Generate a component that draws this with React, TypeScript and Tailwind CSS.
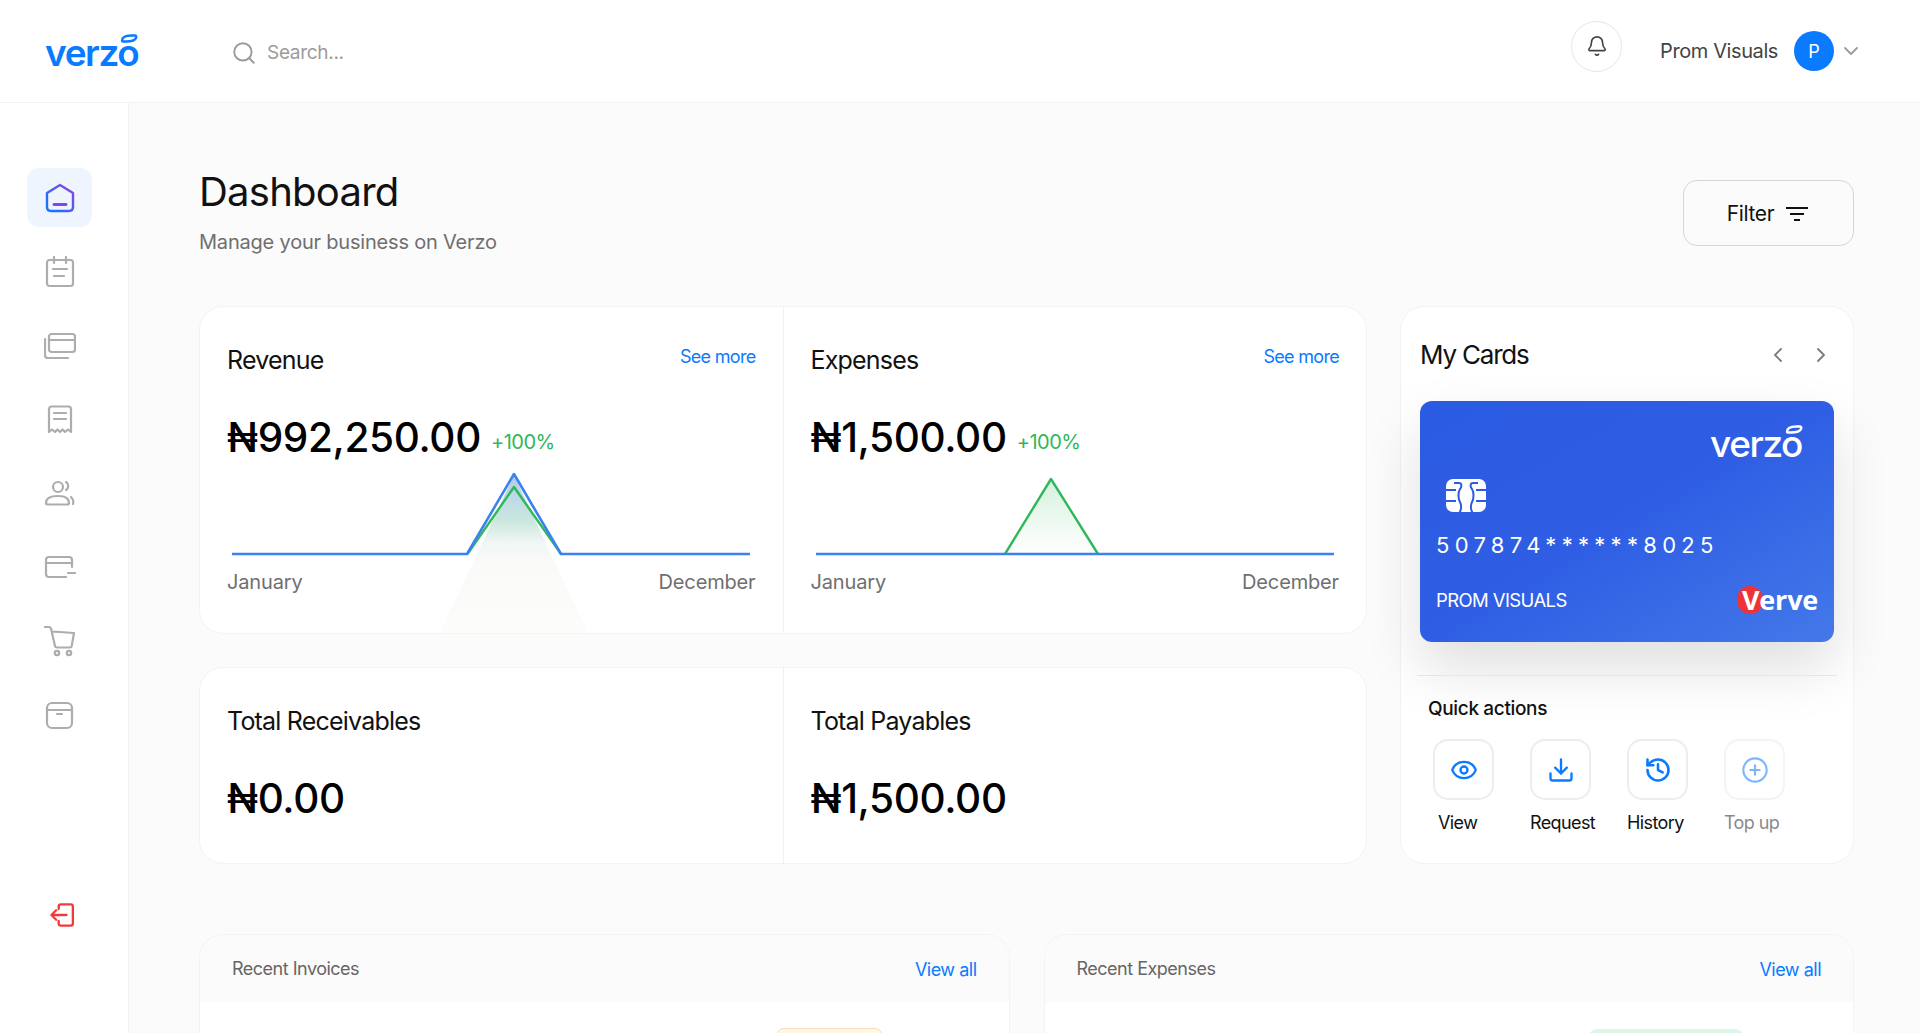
import { Search, Bell, ChevronDown, ChevronLeft, ChevronRight, Eye, Download, History, CirclePlus } from 'lucide-react';

const font = { fontFamily: 'Inter, "Liberation Sans", sans-serif' };

function Logo({ white = false }: { white?: boolean }) {
  const color = white ? 'text-white font-medium' : 'text-[#0a7aff] font-semibold';
  return (
    <div className={`relative w-[94px] h-[34px] ${color}`}>
      <span className="absolute left-0 bottom-[-5px] text-[37px] leading-[40px] tracking-[-1.4px]">verzo</span>
      <svg className="absolute right-[1px] top-0" width="18" height="9" viewBox="0 0 18 9" fill="none">
        <path d="M2 7 C2 3 6 1.5 11 1.5 H15 C16.5 1.5 16.5 3 16 4 C15 6.5 11 7.5 6 7.5 H3 C2.4 7.5 2 7.3 2 7 Z" stroke="currentColor" strokeWidth="2.4" />
      </svg>
    </div>
  );
}

function HomeIcon() {
  return (
    <svg width="30" height="30" viewBox="0 0 30 30" fill="none" strokeWidth="2.4" strokeLinecap="round" strokeLinejoin="round">
      <defs>
        <linearGradient id="homeGrad" x1="2" y1="28" x2="28" y2="4" gradientUnits="userSpaceOnUse">
          <stop stopColor="#0a7aff" />
          <stop offset="1" stopColor="#8a44e0" />
        </linearGradient>
      </defs>
      <path d="M15 2 L2 10 V24 C2 26.5 3.5 28 6 28 H24 C26.5 28 28 26.5 28 24 V10 Z" stroke="url(#homeGrad)" />
      <path d="M9 21.5 H21" stroke="#7c4ae6" strokeWidth="2.8" />
    </svg>
  );
}

const stroke = { stroke: '#adadad', strokeWidth: 2.2, strokeLinecap: 'round' as const, strokeLinejoin: 'round' as const, fill: 'none' };

function NavIcon({ name }: { name: string }) {
  return (
    <svg width="32" height="32" viewBox="0 0 32 32" {...stroke}>
      {name === 'calendar' && (
        <>
          <rect x="3" y="4" width="26" height="26" rx="2.5" />
          <path d="M10 1 V7 M22 1 V7 M9 13 H23 M10 20 H20" />
        </>
      )}
      {name === 'cards' && (
        <>
          <rect x="5" y="4" width="26" height="18" rx="2.5" />
          <path d="M5 10 H31" />
          <path d="M1 9 V25 C1 27 2 28 4 28 H24" />
        </>
      )}
      {name === 'receipt' && (
        <>
          <path d="M5 28 V5 C5 3.5 6 2.5 7.5 2.5 H24.5 C26 2.5 27 3.5 27 5 V28 L24 25.5 L21 28 L18.5 25.5 L16 28 L13.5 25.5 L11 28 L8 25.5 Z" />
          <path d="M10 9 H22 M10 15 H22" />
        </>
      )}
      {name === 'users' && (
        <>
          <circle cx="14" cy="10" r="5" />
          <path d="M2 26 C2 21 7 19 14 19 C20 19 25 21 25 26 C25 27 24 27.5 23 27.5 H4 C3 27.5 2 27 2 26 Z" />
          <path d="M22 5 C25 7 25 11 22 13 M27 20 C29 22 30 24 29 27" />
        </>
      )}
      {name === 'wallet' && (
        <>
          <path d="M22 26 H5 C3 26 2 25 2 23 V9 C2 7 3 6 5 6 H25 C27 6 28 7 28 9 V16" />
          <path d="M2 12 H28 M24 22 H31" />
        </>
      )}
      {name === 'cart' && (
        <>
          <path d="M1 2 H5 C6 2 6.5 2.5 7 3.5 L11 21 C11.2 22 12 22.5 13 22.5 H26 C27 22.5 27.5 22 27.7 21 L30 8 L8 6.5" />
          <circle cx="13" cy="28" r="2.2" />
          <circle cx="25" cy="28" r="2.2" />
        </>
      )}
      {name === 'box' && (
        <>
          <rect x="3" y="4" width="25" height="25" rx="5" />
          <path d="M3 11 H28 M13 15 H18" />
        </>
      )}
    </svg>
  );
}

function Sidebar() {
  const items = ['calendar', 'cards', 'receipt', 'users', 'wallet', 'cart', 'box'];
  return (
    <aside className="w-[129px] shrink-0 bg-white border-r border-[#f1f1f1] flex flex-col pl-[27px] pt-[65px]">
      <div className="w-[65px] h-[59px] rounded-[12px] bg-[#eff5ff] flex items-center justify-center">
        <HomeIcon />
      </div>
      <div className="flex flex-col gap-[41.8px] w-[65px] items-center mt-[29px]">
        {items.map(i => (
          <div key={i} className="h-[32px] flex items-center justify-center">
            <NavIcon name={i} />
          </div>
        ))}
      </div>
      <div className="w-[65px] flex justify-center mt-[172px] pl-[7px]">
        <svg width="26" height="24" viewBox="0 0 30 28" fill="none" stroke="#f23a3a" strokeWidth="2.7" strokeLinecap="round" strokeLinejoin="round">
          <path d="M10 7 V4 C10 2.5 11 1.5 12.5 1.5 H24 C25.5 1.5 26.5 2.5 26.5 4 V24 C26.5 25.5 25.5 26.5 24 26.5 H12.5 C11 26.5 10 25.5 10 24 V21" />
          <path d="M19 14 H2 M7 8.5 L1.5 14 L7 19.5" />
        </svg>
      </div>
    </aside>
  );
}

function RevenueChart() {
  return (
    <svg className="block overflow-visible" width="520" height="84" viewBox="0 0 520 84" fill="none">
      <defs>
        <linearGradient id="revFill" x1="0" y1="0" x2="0" y2="1">
          <stop stopColor="#8fb4ea" stopOpacity="0.7" />
          <stop offset="0.3" stopColor="#a9d8c8" stopOpacity="0.6" />
          <stop offset="0.44" stopColor="#e6efee" stopOpacity="0.5" />
          <stop offset="0.52" stopColor="#f8f8f6" stopOpacity="0.8" />
          <stop offset="1" stopColor="#fbfbf9" stopOpacity="0.7" />
        </linearGradient>
      </defs>
      <path d="M282 1 L208 159 H356 Z" fill="url(#revFill)" />
      <path d="M235.5 80 L282 13 L329 80" stroke="#2fb85a" strokeWidth="2.4" strokeLinejoin="round" />
      <path d="M0 80 H235 L282 0 L329 80 H518" stroke="#3b82f0" strokeWidth="2.6" strokeLinejoin="round" />
    </svg>
  );
}

function ExpenseChart() {
  return (
    <svg className="block overflow-visible" width="520" height="84" viewBox="0 0 520 84" fill="none">
      <defs>
        <linearGradient id="expFill" x1="0" y1="0" x2="0" y2="1">
          <stop stopColor="#2fb85a" stopOpacity="0.2" />
          <stop offset="1" stopColor="#2fb85a" stopOpacity="0" />
        </linearGradient>
      </defs>
      <path d="M189 80 L235 5 L282 80 Z" fill="url(#expFill)" />
      <path d="M189 80 L235 5 L282 80" stroke="#2fb85a" strokeWidth="2.4" strokeLinejoin="round" />
      <path d="M0 80 H518" stroke="#3b82f0" strokeWidth="2.6" />
    </svg>
  );
}

function StatCell({ title, amount, badge, link, chart, border }: { title: string; amount: string; badge?: string; link?: boolean; chart?: React.ReactNode; border?: boolean }) {
  return (
    <div className={`relative flex-1 pl-[27px] pr-[27px] overflow-hidden ${border ? 'border-r border-[#f1f1f1]' : ''}`}>
      <div className="flex justify-between items-start pt-[38px]">
        <p className="text-[25px] leading-[30px] text-[#111] tracking-[-0.8px]">{title}</p>
        {link && <a className="text-[18px] leading-[24px] text-[#0a7aff] tracking-[-0.7px]">See more</a>}
      </div>
      <div className="flex items-center gap-[10px] mt-[39px]">
        <span className="text-[40.5px] leading-[48px] font-medium text-black tracking-[-0.35px]">{amount}</span>
        {badge && <span className="text-[20px] leading-[24px] mt-[8px] text-[#2fb85a] tracking-[-0.5px]">{badge}</span>}
      </div>
      {chart && (
        <>
          <div className="mt-[12px] ml-[5px]">{chart}</div>
          <div className="relative flex justify-between mt-[10px] text-[20px] leading-[28px] text-[#6f6f6f] tracking-[-0.15px]">
            <span>January</span>
            <span>December</span>
          </div>
        </>
      )}
    </div>
  );
}

function CardChip() {
  return (
    <svg width="40" height="33" viewBox="0 0 40 33" fill="none">
      <rect width="40" height="33" rx="7" fill="white" />
      <path d="M0 11 H10 M0 22 H10 M30 11 H40 M30 22 H40 M8 4 H13 C16 4 16 8 14 10 C12 13 12 20 14 23 C16 27 15 33 13 33 M32 4 H27 C24 4 24 8 26 10 C28 13 28 20 26 23 C24 27 25 33 27 33" stroke="#2c5be3" strokeWidth="2" />
    </svg>
  );
}

function QuickAction({ label, icon, muted, labelOffset }: { label: string; icon: React.ReactNode; muted?: boolean; labelOffset: string }) {
  return (
    <div className="w-[61px] relative">
      <div className={`w-[61px] h-[61px] rounded-[15px] bg-white border-2 flex items-center justify-center ${muted ? 'border-[#f4f4f4]' : 'border-[#ededed]'}`}>
        {icon}
      </div>
      <p className={`mt-[10px] whitespace-nowrap text-[18px] leading-[26px] tracking-[-0.6px] ${labelOffset} ${muted ? 'text-[#8a8a8a]' : 'text-[#111]'}`}>{label}</p>
    </div>
  );
}

function MyCards() {
  return (
    <div className="row-span-2 bg-white rounded-[24px] border border-[#f3f3f3] flex flex-col">
      <div className="flex items-center justify-between pl-[19px] pr-[20px] pt-[30px] pb-[28px]">
        <h3 className="text-[26px] leading-[36px] text-[#111] tracking-[-1.2px]">My Cards</h3>
        <div className="flex gap-[19px] text-[#7b7b7b]">
          <ChevronLeft className="w-6 h-6" strokeWidth={1.8} />
          <ChevronRight className="w-6 h-6" strokeWidth={1.8} />
        </div>
      </div>
      <div className="mx-[19px] h-[241px] rounded-[12px] bg-gradient-to-br from-[#2c5be3] via-[#2f5ee4] to-[#4478e9] shadow-[0_26px_56px_rgba(0,0,0,0.13)] text-white px-[16px] pt-[24px] flex flex-col">
        <div className="flex justify-end pr-[14px]">
          <Logo white />
        </div>
        <div className="mt-[20px] ml-[10px]"><CardChip /></div>
        <p className="mt-[18px] text-[22px] leading-[30px] tracking-[5.3px]">507874******8025</p>
        <div className="flex justify-between items-center mt-[24px]">
          <p className="text-[18.5px] leading-[28px] tracking-[-0.6px]">PROM VISUALS</p>
          <div className="relative h-[30px] w-[81px] mt-[2px]">
            <span className="absolute left-0 top-0 w-[26px] h-[28px] rounded-full bg-[#ee3338]" />
            <span className="absolute left-[5px] top-[-3px] text-[27px] leading-[34px] font-bold tracking-[-0.2px]" style={{ fontFamily: '"Open Sans", sans-serif' }}>Verve</span>
          </div>
        </div>
      </div>
      <div className="relative h-px bg-[#e6e6e6] mx-[16px] mt-[33px]" />
      <p className="relative ml-[27px] mt-[21px] text-[19px] leading-[24px] font-medium text-[#111] tracking-[-0.35px]">Quick actions</p>
      <div className="flex gap-[36px] ml-[32px] mt-[18px]">
        <QuickAction label="View" labelOffset="ml-[5px]" icon={<Eye className="w-7 h-7 text-[#0a7aff]" strokeWidth={2} />} />
        <QuickAction label="Request" labelOffset="" icon={<Download className="w-7 h-7 text-[#0a7aff]" strokeWidth={2} />} />
        <QuickAction label="History" labelOffset="" icon={<History className="w-7 h-7 text-[#0a7aff]" strokeWidth={2.2} />} />
        <QuickAction label="Top up" labelOffset="" muted icon={<CirclePlus className="w-7 h-7 text-[#7fb5fb]" strokeWidth={1.8} />} />
      </div>
    </div>
  );
}

function RecentPanel({ title, pill }: { title: string; pill: string }) {
  return (
    <div className="h-[120px] rounded-t-[24px] border border-b-0 border-[#f3f3f3] bg-white overflow-hidden">
      <div className="h-[67px] bg-[#fbfbfb] flex items-center justify-between px-[32px]">
        <p className="text-[18px] text-[#666] tracking-[-0.5px]">{title}</p>
        <a className="text-[18px] text-[#0a7aff] tracking-[-0.5px] mt-[2px]">View all</a>
      </div>
      <div className="flex justify-end pr-[124px]">
        <div className={pill} />
      </div>
    </div>
  );
}

export default function App() {
  return (
    <div className="h-screen w-full overflow-hidden flex flex-col bg-[#fbfbfb]" style={font}>
      <header className="h-[103px] shrink-0 bg-white border-b border-[#f3f3f3] flex items-center pl-[45px] pr-[57px]">
        <Logo />
        <div className="flex items-center gap-[10px] ml-[92px] mt-[4px] text-[#9b9b9b]">
          <Search className="w-[26px] h-[26px]" strokeWidth={1.8} />
          <span className="text-[19px] tracking-[-0.3px]">Search...</span>
        </div>
        <div className="ml-auto flex items-center">
          <div className="w-[51px] h-[51px] mt-[-10px] rounded-full border border-[#e6e6e6] flex items-center justify-center text-[#444]">
            <Bell className="w-[22px] h-[22px]" strokeWidth={1.8} />
          </div>
          <span className="ml-[38px] text-[20px] text-[#444] tracking-[-0.4px]">Prom Visuals</span>
          <div className="ml-[16px] w-[40px] h-[40px] rounded-full bg-[#0a7aff] text-white flex items-center justify-center text-[18px]">P</div>
          <ChevronDown className="ml-[5px] w-[24px] h-[24px] text-[#9b9b9b]" strokeWidth={1.8} />
        </div>
      </header>
      <div className="flex flex-1 min-h-0">
        <Sidebar />
        <main className="flex-1 pl-[70px] pr-[66px] pt-[63px] overflow-hidden">
          <div className="flex justify-between items-start">
            <div>
              <h1 className="mt-[1px] text-[40px] leading-[50px] font-normal text-[#111] tracking-[-0.75px]">Dashboard</h1>
              <p className="mt-[11px] text-[20px] leading-[28px] text-[#6f6f6f] tracking-[-0.2px]">Manage your business on Verzo</p>
            </div>
            <button className="mt-[14px] w-[171px] h-[66px] rounded-[14px] border-[1.5px] border-[#d6d6d6] flex items-center justify-center gap-[12px] pt-[2px] pr-[2px] text-[21px] text-[#111] tracking-[-0.4px]">
              Filter
              <svg width="22" height="16" viewBox="0 0 22 16" fill="none" stroke="#111" strokeWidth="2.2">
                <path d="M0 2 H22 M4 8 H18 M8 14 H14" />
              </svg>
            </button>
          </div>
          <div className="grid grid-cols-[1168px_454px] grid-rows-[328px_197px] gap-x-[33px] gap-y-[33px] mt-[50px]">
            <div className="flex bg-white rounded-[24px] border border-[#f3f3f3] overflow-hidden">
              <StatCell title="Revenue" amount="₦992,250.00" badge="+100%" link chart={<RevenueChart />} border />
              <StatCell title="Expenses" amount="₦1,500.00" badge="+100%" link chart={<ExpenseChart />} />
            </div>
            <MyCards />
            <div className="flex bg-white rounded-[24px] border border-[#f3f3f3] overflow-hidden">
              <StatCell title="Total Receivables" amount="₦0.00" border />
              <StatCell title="Total Payables" amount="₦1,500.00" />
            </div>
          </div>
          <div className="grid grid-cols-2 gap-[34px] mt-[70px]">
            <RecentPanel title="Recent Invoices" pill="w-[107px] h-[20px] mt-[26px] mr-[2px] rounded-t-[8px] bg-[#fff8e2] border border-[#f5dcc0]" />
            <RecentPanel title="Recent Expenses" pill="w-[154px] h-[20px] mt-[27px] mr-[-14px] rounded-t-[8px] bg-[#dcf6e8]" />
          </div>
        </main>
      </div>
    </div>
  );
}
